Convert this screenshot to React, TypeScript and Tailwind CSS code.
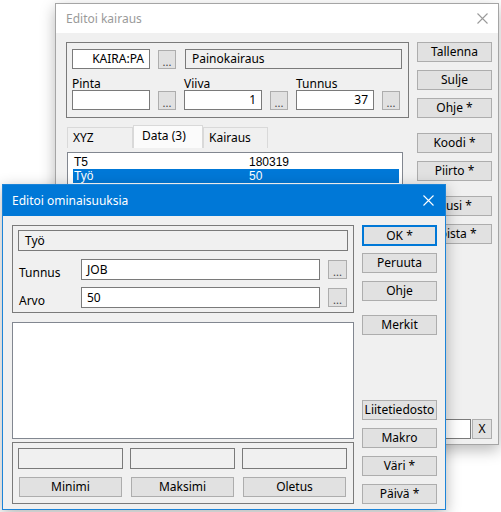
import React from "react"

function CloseX({ color }: { color: string }) {
  return (
    <svg width="11" height="11" viewBox="0 0 11 11">
      <path d="M0.5 0.5L10.5 10.5M10.5 0.5L0.5 10.5" stroke={color} strokeWidth="1.1" fill="none" />
    </svg>
  )
}

function Btn({ label, className = "", focus = false }: { label: string; className?: string; focus?: boolean }) {
  return (
    <div
      className={`h-[20px] shrink-0 flex items-center justify-center bg-[#e1e1e1] text-[12px] leading-none text-black ${
        focus ? "border-2 border-[#0078d7]" : "border border-[#adadad]"
      } ${className}`}
    >
      {label}
    </div>
  )
}

function Dots({ className = "" }: { className?: string }) {
  return (
    <div className={`w-[18px] h-[19px] shrink-0 flex items-center justify-center bg-[#e1e1e1] border border-[#adadad] text-[11px] leading-none text-[#444] pt-[4px] ${className}`}>
      ...
    </div>
  )
}

function Input({ value = "", right = false, className = "" }: { value?: string; right?: boolean; className?: string }) {
  return (
    <div
      className={`h-[20px] shrink-0 flex items-center bg-white border border-[#7a7a7a] text-[12px] leading-none px-[5px] ${
        right ? "justify-end" : "justify-start"
      } ${className}`}
    >
      {value}
    </div>
  )
}

function ReadOnly({ value, className = "" }: { value: string; className?: string }) {
  return (
    <div className={`h-[20px] shrink-0 flex items-center bg-[#f0f0f0] border border-[#7a7a7a] text-[12px] leading-none px-[6px] ${className}`}>
      {value}
    </div>
  )
}

function ListRow({ name, value, selected = false }: { name: string; value: string; selected?: boolean }) {
  return (
    <div className={`h-[14px] flex items-center font-['Liberation_Sans',sans-serif] text-[12px] leading-[14px] ${selected ? "bg-[#0078d7] text-white" : ""}`}>
      <span className="w-[176px] pl-[1px]">{name}</span>
      <span>{value}</span>
    </div>
  )
}

function BackWindow() {
  return (
    <div className="absolute left-[55px] top-[3px] w-[444px] h-[442px] border border-[#a5a5a5] bg-[#f0f0f0] flex flex-col shadow-[0_5px_14px_rgba(0,0,0,0.28)]">
      {/* TITLE */}
      <div className="h-[29px] shrink-0 bg-white flex items-center justify-between pl-[10px] pr-[10px]">
        <span className="text-[12px] text-[#9a9a9a] pt-[1px]">Editoi kairaus</span>
        <CloseX color="#9a9a9a" />
      </div>

      <div className="flex-1 min-h-0 flex gap-[8px] pt-[9px] pl-[10px] pr-[6px] pb-[5px]">
        {/* LEFT */}
        <div className="w-[343px] flex flex-col">
          <div className="h-[76px] shrink-0 border border-[#7a7a7a] pt-[6px] pl-[5px] pr-[6px]">
            <div className="flex items-center">
              <Input value="KAIRA:PA" right className="w-[78px]" />
              <Dots className="ml-[8px]" />
              <ReadOnly value="Painokairaus" className="ml-[9px] w-[217px]" />
            </div>
            <div className="flex gap-[8px]">
              {[
                { label: "Pinta", value: "" },
                { label: "Viiva", value: "1" },
                { label: "Tunnus", value: "37" },
              ].map(col => (
                <div key={col.label} className="w-[104px] flex flex-col">
                  <div className="h-[21px] flex items-end text-[12px] leading-[12px]">{col.label}</div>
                  <div className="flex items-center">
                    <Input value={col.value} right className="w-[78px]" />
                    <Dots className="ml-[8px]" />
                  </div>
                </div>
              ))}
            </div>
          </div>

          {/* TABS */}
          <div className="mt-[7px] h-[23px] shrink-0 flex items-end pl-[1px]">
            <div className="w-[66px] h-[21px] bg-[#f0f0f0] border border-b-0 border-[#d9d9d9] text-[12px] leading-[20px] pl-[5px]">XYZ</div>
            <div className="w-[70px] h-[23px] bg-[#fbfbfb] border border-b-0 border-[#d9d9d9] text-[12px] leading-[20px] pl-[8px]">Data (3)</div>
            <div className="w-[65px] h-[21px] bg-[#f0f0f0] border border-b-0 border-[#d9d9d9] text-[12px] leading-[20px] pl-[5px]">Kairaus</div>
          </div>

          {/* LIST */}
          <div className="mt-[4px] ml-[1px] w-[336px] flex-1 bg-white border border-[#828790] pt-[2px] pl-[5px] pr-[3px]">
            <ListRow name="T5" value="180319" />
            <ListRow name="Työ" value="50" selected />
          </div>
        </div>

        {/* RIGHT BUTTONS */}
        <div className="w-[75px] flex flex-col">
          <Btn label="Tallenna" />
          <Btn label="Sulje" className="mt-[8px]" />
          <Btn label="Ohje *" className="mt-[8px]" />
          <Btn label="Koodi *" className="mt-[15px]" />
          <Btn label="Piirto *" className="mt-[8px]" />
          <Btn label="Uusi *" className="mt-[15px]" />
          <Btn label="Poista *" className="mt-[8px]" />
          <div className="flex-1" />
          <div className="h-[20px] flex gap-[1px]">
            <div className="flex-1 bg-white border border-[#7a7a7a]" />
            <div className="w-[20px] flex items-center justify-center bg-[#e1e1e1] border border-[#adadad] text-[12px] leading-none">X</div>
          </div>
        </div>
      </div>
    </div>
  )
}

function FrontWindow() {
  return (
    <div className="absolute left-[2px] top-[184px] w-[444px] h-[326px] border border-[#1c84d8] bg-[#f0f0f0] flex flex-col shadow-[0_4px_14px_rgba(0,0,0,0.3)]">
      {/* TITLE */}
      <div className="h-[31px] shrink-0 bg-[#0078d7] flex items-center justify-between pl-[9px] pr-[11px]">
        <span className="text-[12px] text-white">Editoi ominaisuuksia</span>
        <CloseX color="#ffffff" />
      </div>

      <div className="flex-1 min-h-0 flex gap-[8px] pt-[9px] pl-[9px] pr-[8px] pb-[5px]">
        {/* LEFT */}
        <div className="w-[342px] flex flex-col">
          <div className="h-[88px] shrink-0 border border-[#7a7a7a] pt-[4px] pl-[5px] pr-[5px]">
            <ReadOnly value="Työ" className="h-[21px] w-[330px]" />
            <div className="mt-[8px] flex items-center">
              <div className="w-[63px] pl-[1px] pt-[7px] text-[12px] leading-none">Tunnus</div>
              <Input value="JOB" className="w-[239px] h-[21px]" />
              <Dots className="ml-[8px] w-[19px]" />
            </div>
            <div className="mt-[7px] flex items-center">
              <div className="w-[63px] pl-[1px] pt-[7px] text-[12px] leading-none">Arvo</div>
              <Input value="50" className="w-[239px] h-[21px]" />
              <Dots className="ml-[8px] w-[19px]" />
            </div>
          </div>

          <div className="mt-[9px] h-[117px] shrink-0 bg-white border border-[#828790]" />

          <div className="mt-[3px] h-[62px] shrink-0 border border-[#7a7a7a] pt-[5px] pl-[5px]">
            <div className="flex gap-[7px]">
              <ReadOnly value="" className="w-[105px] h-[21px]" />
              <ReadOnly value="" className="w-[105px] h-[21px]" />
              <ReadOnly value="" className="w-[105px] h-[21px]" />
            </div>
            <div className="mt-[8px] flex gap-[9px] pl-[1px]">
              <Btn label="Minimi" className="w-[103px]" />
              <Btn label="Maksimi" className="w-[103px]" />
              <Btn label="Oletus" className="w-[103px]" />
            </div>
          </div>
        </div>

        {/* RIGHT BUTTONS */}
        <div className="w-[75px] flex flex-col">
          <Btn label="OK *" focus className="h-[21px]" />
          <Btn label="Peruuta" className="mt-[7px]" />
          <Btn label="Ohje" className="mt-[8px]" />
          <Btn label="Merkit" className="mt-[14px]" />
          <div className="flex-1" />
          <Btn label="Liitetiedosto" />
          <Btn label="Makro" className="mt-[8px]" />
          <Btn label="Väri *" className="mt-[8px]" />
          <Btn label="Päivä *" className="mt-[8px]" />
        </div>
      </div>
    </div>
  )
}

export default function App() {
  return (
    <div className="relative w-[501px] h-[512px] bg-white overflow-hidden font-['Noto_Sans',sans-serif] text-[12px] text-black">
      <BackWindow />
      <FrontWindow />
    </div>
  )
}
